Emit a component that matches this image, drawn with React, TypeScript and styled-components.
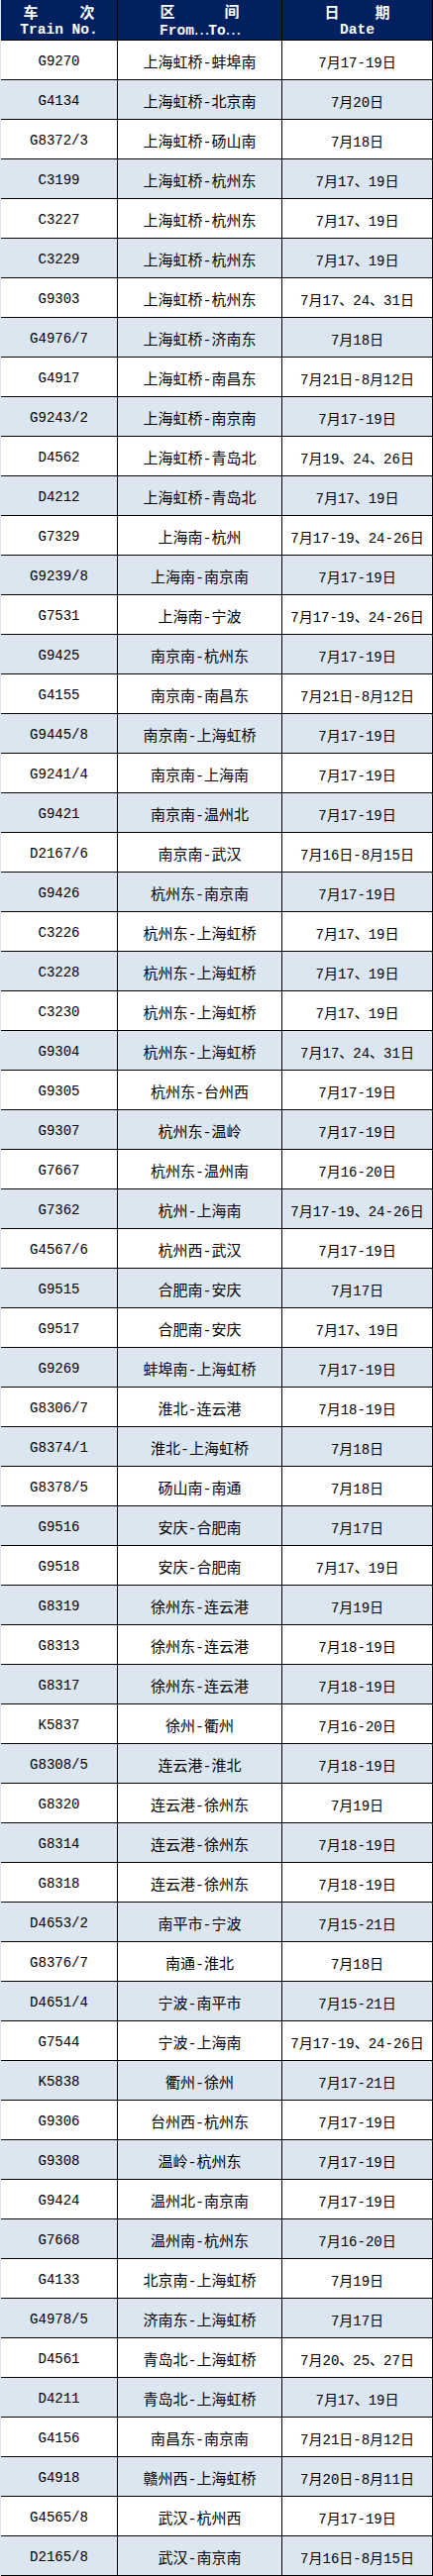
import React from "react";
import styled, { createGlobalStyle } from "styled-components";

const GlobalStyle = createGlobalStyle`
    html, body {
        margin: 0;
        padding: 0;
        background: #fff;
    }
`;

const Sheet = styled.div`
    width: 437px;
    box-sizing: border-box;
    border-left: 1px solid #dce6f1;
    font-family: "Liberation Mono", "Noto Sans CJK SC", monospace;
    color: #000;
`;

const Row = styled.div<{ $shaded?: boolean; $head?: boolean }>`
    display: grid;
    grid-template-columns: 118px 166px 152px;
    height: ${(p) => (p.$head ? 41 : 40)}px;
    box-sizing: border-box;
    border-bottom: 1px solid #000;
    background: ${(p) => (p.$head ? "#002060" : p.$shaded ? "#dce6f1" : "#fff")};
`;

const Cell = styled.div<{ $size?: number }>`
    display: flex;
    align-items: center;
    justify-content: center;
    box-sizing: border-box;
    border-right: 1px solid #000;
    padding-top: 3px;
    font-size: ${(p) => p.$size || 15}px;
    white-space: nowrap;
`;

const HeadCell = styled.div`
    display: flex;
    flex-direction: column;
    align-items: center;
    justify-content: center;
    box-sizing: border-box;
    border-right: 1px solid #000;
    color: #fff;
    font-weight: bold;
    padding-top: 1px;
`;

const HeadZh = styled.div<{ $w: number }>`
    display: flex;
    justify-content: space-between;
    width: ${(p) => p.$w}px;
    font-family: "Noto Sans CJK SC", sans-serif;
    font-size: 15px;
    line-height: 18px;
`;

const HeadEn = styled.div`
    font-family: "Liberation Mono", monospace;
    font-size: 14.5px;
    line-height: 18px;
`;

const Dots = styled.span`
    font-family: "Noto Sans CJK SC", sans-serif;
    font-weight: normal;
    letter-spacing: -1px;
`;

type Train = [string, string, string];

const trains: Train[] = [
    ["G9270", "上海虹桥-蚌埠南", "7月17-19日"],
    ["G4134", "上海虹桥-北京南", "7月20日"],
    ["G8372/3", "上海虹桥-砀山南", "7月18日"],
    ["C3199", "上海虹桥-杭州东", "7月17、19日"],
    ["C3227", "上海虹桥-杭州东", "7月17、19日"],
    ["C3229", "上海虹桥-杭州东", "7月17、19日"],
    ["G9303", "上海虹桥-杭州东", "7月17、24、31日"],
    ["G4976/7", "上海虹桥-济南东", "7月18日"],
    ["G4917", "上海虹桥-南昌东", "7月21日-8月12日"],
    ["G9243/2", "上海虹桥-南京南", "7月17-19日"],
    ["D4562", "上海虹桥-青岛北", "7月19、24、26日"],
    ["D4212", "上海虹桥-青岛北", "7月17、19日"],
    ["G7329", "上海南-杭州", "7月17-19、24-26日"],
    ["G9239/8", "上海南-南京南", "7月17-19日"],
    ["G7531", "上海南-宁波", "7月17-19、24-26日"],
    ["G9425", "南京南-杭州东", "7月17-19日"],
    ["G4155", "南京南-南昌东", "7月21日-8月12日"],
    ["G9445/8", "南京南-上海虹桥", "7月17-19日"],
    ["G9241/4", "南京南-上海南", "7月17-19日"],
    ["G9421", "南京南-温州北", "7月17-19日"],
    ["D2167/6", "南京南-武汉", "7月16日-8月15日"],
    ["G9426", "杭州东-南京南", "7月17-19日"],
    ["C3226", "杭州东-上海虹桥", "7月17、19日"],
    ["C3228", "杭州东-上海虹桥", "7月17、19日"],
    ["C3230", "杭州东-上海虹桥", "7月17、19日"],
    ["G9304", "杭州东-上海虹桥", "7月17、24、31日"],
    ["G9305", "杭州东-台州西", "7月17-19日"],
    ["G9307", "杭州东-温岭", "7月17-19日"],
    ["G7667", "杭州东-温州南", "7月16-20日"],
    ["G7362", "杭州-上海南", "7月17-19、24-26日"],
    ["G4567/6", "杭州西-武汉", "7月17-19日"],
    ["G9515", "合肥南-安庆", "7月17日"],
    ["G9517", "合肥南-安庆", "7月17、19日"],
    ["G9269", "蚌埠南-上海虹桥", "7月17-19日"],
    ["G8306/7", "淮北-连云港", "7月18-19日"],
    ["G8374/1", "淮北-上海虹桥", "7月18日"],
    ["G8378/5", "砀山南-南通", "7月18日"],
    ["G9516", "安庆-合肥南", "7月17日"],
    ["G9518", "安庆-合肥南", "7月17、19日"],
    ["G8319", "徐州东-连云港", "7月19日"],
    ["G8313", "徐州东-连云港", "7月18-19日"],
    ["G8317", "徐州东-连云港", "7月18-19日"],
    ["K5837", "徐州-衢州", "7月16-20日"],
    ["G8308/5", "连云港-淮北", "7月18-19日"],
    ["G8320", "连云港-徐州东", "7月19日"],
    ["G8314", "连云港-徐州东", "7月18-19日"],
    ["G8318", "连云港-徐州东", "7月18-19日"],
    ["D4653/2", "南平市-宁波", "7月15-21日"],
    ["G8376/7", "南通-淮北", "7月18日"],
    ["D4651/4", "宁波-南平市", "7月15-21日"],
    ["G7544", "宁波-上海南", "7月17-19、24-26日"],
    ["K5838", "衢州-徐州", "7月17-21日"],
    ["G9306", "台州西-杭州东", "7月17-19日"],
    ["G9308", "温岭-杭州东", "7月17-19日"],
    ["G9424", "温州北-南京南", "7月17-19日"],
    ["G7668", "温州南-杭州东", "7月16-20日"],
    ["G4133", "北京南-上海虹桥", "7月19日"],
    ["G4978/5", "济南东-上海虹桥", "7月17日"],
    ["D4561", "青岛北-上海虹桥", "7月20、25、27日"],
    ["D4211", "青岛北-上海虹桥", "7月17、19日"],
    ["G4156", "南昌东-南京南", "7月21日-8月12日"],
    ["G4918", "赣州西-上海虹桥", "7月20日-8月11日"],
    ["G4565/8", "武汉-杭州西", "7月17-19日"],
    ["D2165/8", "武汉-南京南", "7月16日-8月15日"],
];

export default function App() {
    return (
        <>
            <GlobalStyle />
            <Sheet>
                <Row $head>
                    <HeadCell>
                        <HeadZh $w={72}><span>车</span><span>次</span></HeadZh>
                        <HeadEn>Train No.</HeadEn>
                    </HeadCell>
                    <HeadCell>
                        <HeadZh $w={80}><span>区</span><span>间</span></HeadZh>
                        <HeadEn>From<Dots>…</Dots>To<Dots>…</Dots></HeadEn>
                    </HeadCell>
                    <HeadCell>
                        <HeadZh $w={66}><span>日</span><span>期</span></HeadZh>
                        <HeadEn>Date</HeadEn>
                    </HeadCell>
                </Row>
                {trains.map(([no, route, date], i) => (
                    <Row key={no + i} $shaded={i % 2 === 1}>
                        <Cell $size={14}>{no}</Cell>
                        <Cell $size={15}>{route}</Cell>
                        <Cell $size={14}>{date}</Cell>
                    </Row>
                ))}
            </Sheet>
        </>
    );
}
